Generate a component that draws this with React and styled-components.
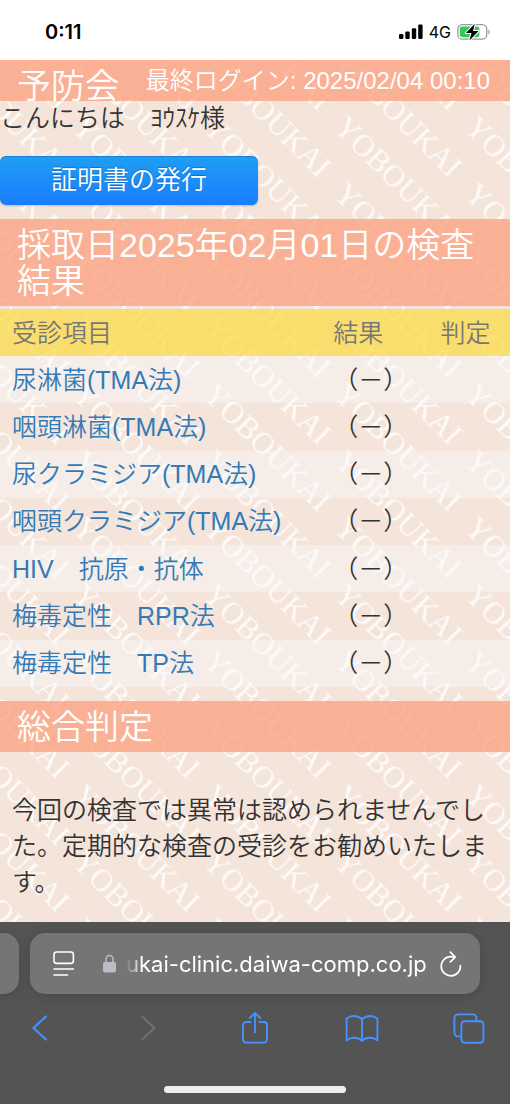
import React from 'react';
import styled, { createGlobalStyle } from 'styled-components';

const colors = {
  page: '#f4e4da',
  bar: 'rgba(251, 163, 130, 0.8)',
  tableHead: 'rgba(251, 220, 81, 0.8)',
  stripe: 'rgba(249, 249, 249, 0.45)',
  link: '#337ab7',
  text: '#333333',
  chrome: '#545454',
  field: '#757575',
  tint: '#4492ff',
};

const results = [
  { id: 'gono-urine', name: '尿淋菌(TMA法)', value: '（－）' },
  { id: 'gono-throat', name: '咽頭淋菌(TMA法)', value: '（－）' },
  { id: 'chla-urine', name: '尿クラミジア(TMA法)', value: '（－）' },
  { id: 'chla-throat', name: '咽頭クラミジア(TMA法)', value: '（－）' },
  { id: 'hiv', name: 'HIV　抗原・抗体', value: '（－）' },
  { id: 'rpr', name: '梅毒定性　RPR法', value: '（－）' },
  { id: 'tp', name: '梅毒定性　TP法', value: '（－）' },
];

// a word is taller than one tile, so each tile also draws its neighbours
const tileRows = [-2, -1, 0, 1];
const tileColumns = [-1, 0];

const Watermark = () => (
  <WatermarkSvg aria-hidden="true">
    <defs>
      <pattern id="watermark" x="71" y="2" width="130.8" height="66.8" patternUnits="userSpaceOnUse">
        {tileColumns.map((column) => tileRows.map((row) => (
          <text
            key={`${column}:${row}`}
            transform={`translate(${column * 130.8} ${row * 66.8}) rotate(45)`}
          >
            YOBOUKAI
          </text>
        )))}
      </pattern>
    </defs>
    <rect width="100%" height="100%" fill="url(#watermark)" />
  </WatermarkSvg>
);

const StatusBar = () => (
  <StatusRow>
    <Clock>0:11</Clock>
    <StatusIcons>
      <svg width="24" height="16" viewBox="0 0 24 16" fill="#000">
        <rect x="0" y="10" width="4.4" height="5" rx="1.2" />
        <rect x="6.3" y="7.4" width="4.4" height="7.6" rx="1.2" />
        <rect x="12.8" y="4.2" width="4.4" height="10.8" rx="1.2" />
        <rect x="19.2" y="0.6" width="4.4" height="14.4" rx="1.2" />
      </svg>
      <Network>4G</Network>
      <svg width="34" height="18" viewBox="0 0 34 18">
        <rect x="0.8" y="1.6" width="29" height="14.6" rx="4.5" fill="none" stroke="#9b9b9b" strokeWidth="1.3" />
        <path d="M31.4 6.4c1.7.4 1.7 4.6 0 5z" fill="#9b9b9b" />
        <rect x="2.8" y="3.6" width="19.6" height="10.6" rx="2.6" fill="#34c759" />
        <path
          d="M17.8 0.8L8.9 10h5.5l-1.9 7.4L21.6 8h-5.6z"
          fill="#000"
          stroke="#fff"
          strokeWidth="2"
          paintOrder="stroke"
          strokeLinejoin="round"
        />
      </svg>
    </StatusIcons>
  </StatusRow>
);

const BrowserBar = () => (
  <Chrome>
    <AddressRow>
      <PreviousTab />
      <AddressField>
        <IconButton aria-label="ページ設定">
          <svg width="22" height="26" viewBox="0 0 22 26" fill="none" stroke="#fff" strokeWidth="1.6" strokeLinecap="round">
            <rect x="1" y="1" width="19.4" height="11.4" rx="2.6" />
            <path d="M1 18h19.4M1 24h13.6" />
          </svg>
        </IconButton>
        <UrlGroup>
          <svg width="13" height="19" viewBox="0 0 13 19">
            <path d="M3 9V5.2a3.5 3.8 0 0 1 7 0V9" fill="none" stroke="#bdbcc4" strokeWidth="1.5" />
            <rect x="0" y="8" width="13" height="10.4" rx="1.8" fill="#bdbcc4" />
          </svg>
          <UrlInput type="text" aria-label="アドレス" defaultValue="ukai-clinic.daiwa-comp.co.jp" />
        </UrlGroup>
        <IconButton aria-label="再読み込み">
          <svg width="22" height="26" viewBox="0 0 22 26" fill="none" stroke="#fff" strokeWidth="1.7" strokeLinecap="round" strokeLinejoin="round">
            <path d="M20.4 14.6A9.6 9.6 0 1 1 10.8 5.6c1.5 0 2.8.1 4 .5" />
            <path d="M10.4 1.2l4.8 5-4.8 4.6" />
          </svg>
        </IconButton>
      </AddressField>
    </AddressRow>

    <Toolbar>
      <ToolButton aria-label="戻る">
        <svg width="18" height="34" viewBox="0 0 18 34" fill="none" stroke={colors.tint} strokeWidth="2.1" strokeLinecap="round" strokeLinejoin="round">
          <path d="M15 5.4L2.4 17l12.6 11.6" />
        </svg>
      </ToolButton>
      <ToolButton aria-label="進む" disabled>
        <svg width="18" height="34" viewBox="0 0 18 34" fill="none" stroke="#707070" strokeWidth="2" strokeLinecap="round" strokeLinejoin="round">
          <path d="M4 5.4L16.4 17 4 28.6" />
        </svg>
      </ToolButton>
      <ToolButton aria-label="共有">
        <svg width="28" height="34" viewBox="0 0 28 34" fill="none" stroke={colors.tint} strokeWidth="1.9" strokeLinecap="round" strokeLinejoin="round">
          <path d="M9.6 11H5a3 3 0 0 0-3 3v14.600a3 3 0 0 0 3 3h18a3 3 0 0 0 3-3V14a3 3 0 0 0-3-3h-4.600" />
          <path d="M14 21.400V2M8.800 7L14 1.800 19.200 7" />
        </svg>
      </ToolButton>
      <ToolButton aria-label="ブックマーク">
        <svg width="34" height="34" viewBox="0 0 34 34" fill="none" stroke={colors.tint} strokeWidth="1.9" strokeLinecap="round" strokeLinejoin="round">
          <path d="M17 8.2C14.8 6 12 5 9 5S3.600 5.800 1.600 7.600V29.400C3.800 27.600 6.300 26.800 9 26.800S14.800 27.700 17 29.800C19.200 27.700 22.300 26.800 25 26.800S30.200 27.600 32.400 29.400V7.600C30.400 5.800 28 5 25 5S19.200 6 17 8.200z" />
          <path d="M17 8.200V29.800" />
        </svg>
      </ToolButton>
      <ToolButton aria-label="タブ一覧">
        <svg width="32" height="34" viewBox="0 0 32 34" fill="none" stroke={colors.tint} strokeWidth="1.9" strokeLinejoin="round">
          <rect x="8.400" y="10.200" width="22" height="21.600" rx="3.400" />
          <path d="M8.200 25.400H5a3.600 3.600 0 0 1-3.600-3.600V7A3.600 3.600 0 0 1 5 3.400h14.800A3.600 3.600 0 0 1 23.400 7v3" />
        </svg>
      </ToolButton>
    </Toolbar>

    <HomeIndicator />
  </Chrome>
);

const App = () => (
  <>
    <GlobalStyle />
    <Screen>
      <StatusBar />
      <Page>
        <Watermark />
        <Content>
          <SiteHeader>
            <SiteName>予防会</SiteName>
            <LastLogin>最終ログイン: 2025/02/04 00:10</LastLogin>
          </SiteHeader>
          <Greeting>こんにちは　ﾖｳｽｹ様</Greeting>
          <IssueButton type="button">証明書の発行</IssueButton>

          <SectionTitle>採取日2025年02月01日の検査結果</SectionTitle>
          <ResultTable>
            <thead>
              <tr>
                <HeadCell scope="col" $width="63%">受診項目</HeadCell>
                <HeadCell scope="col" $width="21%">結果</HeadCell>
                <HeadCell scope="col">判定</HeadCell>
              </tr>
            </thead>
            <tbody>
              {results.map((result) => (
                <ResultRow key={result.id}>
                  <Cell><ItemLink href={`#${result.id}`}>{result.name}</ItemLink></Cell>
                  <Cell>{result.value}</Cell>
                  <Cell />
                </ResultRow>
              ))}
            </tbody>
          </ResultTable>

          <SectionTitle>総合判定</SectionTitle>
          <Summary>
            今回の検査では異常は認められませんでした。定期的な検査の受診をお勧めいたします。
          </Summary>
        </Content>
      </Page>
      <BrowserBar />
    </Screen>
  </>
);

const GlobalStyle = createGlobalStyle`
  * {
    box-sizing: border-box;
  }

  body {
    margin: 0;
    background-color: ${colors.page};
    color: ${colors.text};
    font-family: 'Liberation Sans', 'Noto Sans CJK JP', sans-serif;
    font-size: 25px;
    font-weight: 350;
  }

  svg {
    display: block;
    flex-shrink: 0;
  }
`;

const Screen = styled.div`
  display: flex;
  flex-direction: column;
  min-height: 100vh;
`;

const StatusRow = styled.div`
  display: flex;
  align-items: center;
  justify-content: space-between;
  height: 60px;
  padding: 4px 19px 0 45px;
  background-color: #ffffff;
  color: #000000;
  font-family: Inter, sans-serif;
`;

const Clock = styled.span`
  font-size: 20px;
  font-weight: 600;
`;

const StatusIcons = styled.div`
  display: flex;
  align-items: center;
  gap: 6px;
`;

const Network = styled.span`
  font-size: 16px;
  font-weight: 400;
`;

const Page = styled.main`
  position: relative;
  flex: 1;
  background-color: ${colors.page};
`;

const WatermarkSvg = styled.svg`
  position: absolute;
  inset: 0;
  width: 100%;
  height: 100%;

  text {
    fill: #ffffff;
    fill-opacity: 0.85;
    font-family: 'Liberation Serif', serif;
    font-size: 31px;
    font-weight: 400;
  }
`;

const Content = styled.div`
  position: relative;
`;

const SiteHeader = styled.header`
  display: flex;
  justify-content: space-between;
  height: 41px;
  padding: 0 20px 0 17px;
  background-color: ${colors.bar};
  color: #ffffff;
`;

const SiteName = styled.h1`
  margin: 0;
  font-size: 34px;
  font-weight: 350;
  line-height: 52px;
`;

const LastLogin = styled.p`
  margin: 0;
  font-size: 24px;
  line-height: 41px;
`;

const Greeting = styled.p`
  margin: 0;
  line-height: 34px;
`;

const IssueButton = styled.button`
  display: block;
  width: 258px;
  height: 49px;
  margin: 21px 0 14px;
  padding: 0;
  border: 0;
  border-radius: 6px;
  background: linear-gradient(#1f9ef3, #1a7dff);
  box-shadow: inset 0 1px 0 rgba(20, 100, 190, 0.5), 0 1px 2px rgba(0, 0, 0, 0.2);
  color: #ffffff;
  font-family: inherit;
  font-size: 26px;
  font-weight: 350;
  line-height: 49px;
  text-shadow: 0 -1px 1px rgba(0, 0, 0, 0.25);
`;

const SectionTitle = styled.h2`
  margin: 0;
  padding: 8px 17px 7px;
  background-color: ${colors.bar};
  color: #ffffff;
  font-size: 34px;
  font-weight: 350;
  line-height: 36px;
`;

const ResultTable = styled.table`
  width: 100%;
  height: 378px;
  margin: 3px 0 14px;
  border-collapse: collapse;
  table-layout: fixed;

  thead {
    background-color: ${colors.tableHead};
  }
`;

const HeadCell = styled.th`
  width: ${(props) => props.$width || 'auto'};
  height: 47px;
  padding: 0 0 0 12px;
  color: #777777;
  font-weight: 350;
  line-height: 36px;
  text-align: left;
`;

const ResultRow = styled.tr`
  &:nth-child(odd) {
    background-color: ${colors.stripe};
  }
`;

const Cell = styled.td`
  height: 47px;
  padding: 0 0 0 12px;
  line-height: 36px;
`;

const ItemLink = styled.a`
  color: ${colors.link};
  text-decoration: none;
`;

const Summary = styled.p`
  margin: 0;
  padding: 40px 12px 21px;
  line-height: 36px;
`;

const Chrome = styled.footer`
  padding-top: 11px;
  background-color: ${colors.chrome};
  font-family: Inter, sans-serif;
`;

const AddressRow = styled.div`
  display: flex;
  gap: 11px;
  padding-right: 30px;
`;

const PreviousTab = styled.div`
  width: 19px;
  border-radius: 0 15px 15px 0;
  background-color: ${colors.field};
  box-shadow: 0 2px 12px rgba(0, 0, 0, 0.14);
`;

const AddressField = styled.div`
  display: flex;
  flex: 1;
  align-items: center;
  justify-content: space-between;
  height: 61px;
  min-width: 0;
  padding: 0 18px 0 23px;
  border-radius: 15px;
  background-color: ${colors.field};
  box-shadow: 0 2px 12px rgba(0, 0, 0, 0.14);
`;

const UrlGroup = styled.div`
  display: flex;
  flex: 1;
  align-items: center;
  gap: 10px;
  min-width: 0;
  padding: 0 12px 0 28px;
`;

const UrlInput = styled.input`
  flex: 1;
  min-width: 0;
  padding: 0;
  border: 0;
  outline: 0;
  background: none;
  color: #ffffff;
  font-family: inherit;
  font-size: 22px;
  line-height: 30px;
  mask-image: linear-gradient(to right, transparent, #000000 16px);
`;

const IconButton = styled.button`
  display: flex;
  justify-content: center;
  padding: 0;
  border: 0;
  background: none;
`;

const ToolButton = styled(IconButton)`
  width: 44px;
`;

const Toolbar = styled.nav`
  display: flex;
  align-items: center;
  justify-content: space-between;
  padding: 17px 19px 0 18px;
`;

const HomeIndicator = styled.div`
  width: 182px;
  height: 7px;
  margin: 41px auto 11px;
  border-radius: 4px;
  background-color: #eeeeee;
`;

export default App;
